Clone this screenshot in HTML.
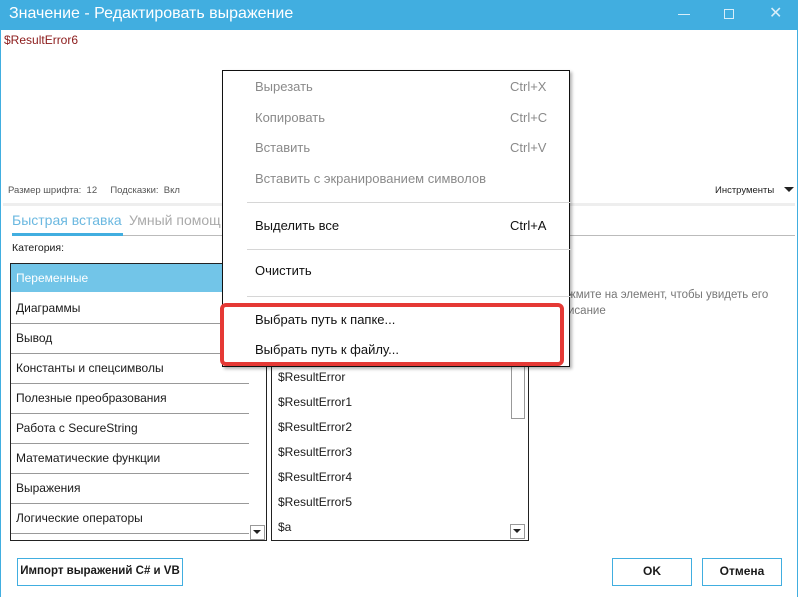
<!DOCTYPE html>
<html><head><meta charset="utf-8"><style>
*{margin:0;padding:0;box-sizing:border-box}
body{width:798px;height:597px;position:relative;background:#fff;font-family:"Segoe UI","Liberation Sans","DejaVu Sans",sans-serif;overflow:hidden;color:#1a1a1a}
.a{position:absolute;white-space:nowrap}
#title{left:0;top:0;width:798px;height:30px;background:#41aee0}
.lb{position:absolute;top:30px;bottom:0;width:1px;background:#41aee0}
.list{position:absolute;border:1px solid #222;background:#fff}
.it{position:absolute;left:0;height:30px;font-size:12px;padding-left:5px;line-height:29px;border-bottom:1px solid #999;white-space:nowrap}
.m{position:absolute;left:32px;font-size:13px;color:#8a8a8a;white-space:nowrap}
.k{position:absolute;left:287px;font-size:13px;color:#8a8a8a}
.sep{position:absolute;left:24px;width:324px;height:1px;background:#d6d6d6}
.btn{position:absolute;border:1px solid #41aee0;font-size:12px;text-align:center;line-height:25px;background:#fff;white-space:nowrap}
.v{position:absolute;left:6px;font-size:12px}
</style></head><body>
<div class="a" id="title"></div>
<div class="a" style="left:9px;top:5px;font-size:16px;color:#fff">Значение - Редактировать выражение</div>
<div class="a" style="left:678px;top:14px;width:12px;height:1px;background:#d8eef9"></div>
<div class="a" style="left:724px;top:9px;width:10px;height:10px;border:1px solid #d8eef9"></div>
<div class="a" style="left:769px;top:6px;font-size:16px;color:#d8eef9;line-height:16px">✕</div>
<div class="lb" style="left:0"></div><div class="lb" style="right:0"></div>
<div class="a" style="left:4px;top:33px;font-size:12px;color:#8b1a1a">$ResultError6</div>
<div class="a" style="left:8px;top:185px;font-size:9.5px;color:#555">Размер шрифта:&nbsp;&nbsp;12&nbsp;&nbsp;&nbsp;&nbsp;&nbsp;Подсказки:&nbsp;&nbsp;Вкл</div>
<div class="a" style="left:715px;top:185px;font-size:9.5px;color:#222">Инструменты</div>
<div class="a" style="left:784px;top:187px;width:0;height:0;border-left:5px solid transparent;border-right:5px solid transparent;border-top:5px solid #222"></div>
<div class="a" style="left:3px;top:203px;width:792px;height:3px;background:#eee"></div>
<div class="a" style="left:12px;top:212px;font-size:14px;color:#6bb8e0">Быстрая вставка</div>
<div class="a" style="left:129px;top:212px;font-size:14px;color:#aaa">Умный помощ</div>
<div class="a" style="left:12px;top:233px;width:111px;height:3px;background:#41aee0"></div>
<div class="a" style="left:123px;top:235px;width:672px;height:1px;background:#bbb"></div>
<div class="a" style="left:12px;top:242px;font-size:10.5px">Категория:</div>
<div class="list" style="left:10px;top:263px;width:257px;height:278px">
<div class="it" style="top:0;width:238px;background:#72c5e8;color:#fff;border-bottom:2px solid #fff">Переменные</div>
<div class="it" style="top:30px;width:238px">Диаграммы</div>
<div class="it" style="top:60px;width:238px">Вывод</div>
<div class="it" style="top:90px;width:238px">Константы и спецсимволы</div>
<div class="it" style="top:120px;width:238px">Полезные преобразования</div>
<div class="it" style="top:150px;width:238px">Работа с SecureString</div>
<div class="it" style="top:180px;width:238px">Математические функции</div>
<div class="it" style="top:210px;width:238px">Выражения</div>
<div class="it" style="top:240px;width:238px">Логические операторы</div>
<div class="a" style="left:239px;top:261px;width:15px;height:15px;border:1px solid #999"></div>
<div class="a" style="left:242px;top:266px;border-left:4px solid transparent;border-right:4px solid transparent;border-top:4px solid #222"></div>
<div class="a" style="left:239px;top:84px;width:15px;height:10px;border:1px solid #999"></div>
</div>
<div class="list" style="left:271px;top:290px;width:258px;height:251px">
<div class="v" style="top:79px">$ResultError</div>
<div class="v" style="top:104px">$ResultError1</div>
<div class="v" style="top:129px">$ResultError2</div>
<div class="v" style="top:154px">$ResultError3</div>
<div class="v" style="top:179px">$ResultError4</div>
<div class="v" style="top:204px">$ResultError5</div>
<div class="v" style="top:229px">$a</div>
<div class="a" style="left:239px;top:60px;width:14px;height:68px;border:1px solid #999;border-top:none"></div>
<div class="a" style="left:238px;top:233px;width:15px;height:15px;border:1px solid #999"></div>
<div class="a" style="left:241px;top:238px;border-left:4px solid transparent;border-right:4px solid transparent;border-top:4px solid #222"></div>
</div>
<div class="a" style="left:568px;top:289px;font-size:11.5px;color:#777">жмите на элемент, чтобы увидеть его</div>
<div class="a" style="left:568px;top:305px;font-size:11.5px;color:#777">исание</div>
<div class="a" style="left:222px;top:70px;width:348px;height:297px;background:#fff;border:1px solid #111;box-shadow:2px 2px 3px rgba(0,0,0,.3)">
<div class="m" style="top:8px">Вырезать</div><div class="k" style="top:8px">Ctrl+X</div>
<div class="m" style="top:39px">Копировать</div><div class="k" style="top:39px">Ctrl+C</div>
<div class="m" style="top:69px">Вставить</div><div class="k" style="top:69px">Ctrl+V</div>
<div class="m" style="top:100px">Вставить с экранированием символов</div>
<div class="sep" style="top:131px"></div>
<div class="m" style="top:147px;color:#111">Выделить все</div><div class="k" style="top:147px;color:#111">Ctrl+A</div>
<div class="sep" style="top:178px"></div>
<div class="m" style="top:192px;color:#111">Очистить</div>
<div class="sep" style="top:225px"></div>
<div class="m" style="top:241px;color:#111">Выбрать путь к папке...</div>
<div class="m" style="top:271px;color:#111">Выбрать путь к файлу...</div>
</div>
<div class="a" style="left:220px;top:303px;width:344px;height:63px;border:4px solid #e53935;border-radius:6px"></div>
<div class="btn" style="left:17px;top:558px;width:166px;height:28px;font-weight:bold;font-size:11.5px">Импорт выражений C# и VB</div>
<div class="btn" style="left:612px;top:558px;width:80px;height:28px;font-weight:bold">OK</div>
<div class="btn" style="left:702px;top:558px;width:80px;height:28px;font-weight:bold">Отмена</div>
</body></html>
